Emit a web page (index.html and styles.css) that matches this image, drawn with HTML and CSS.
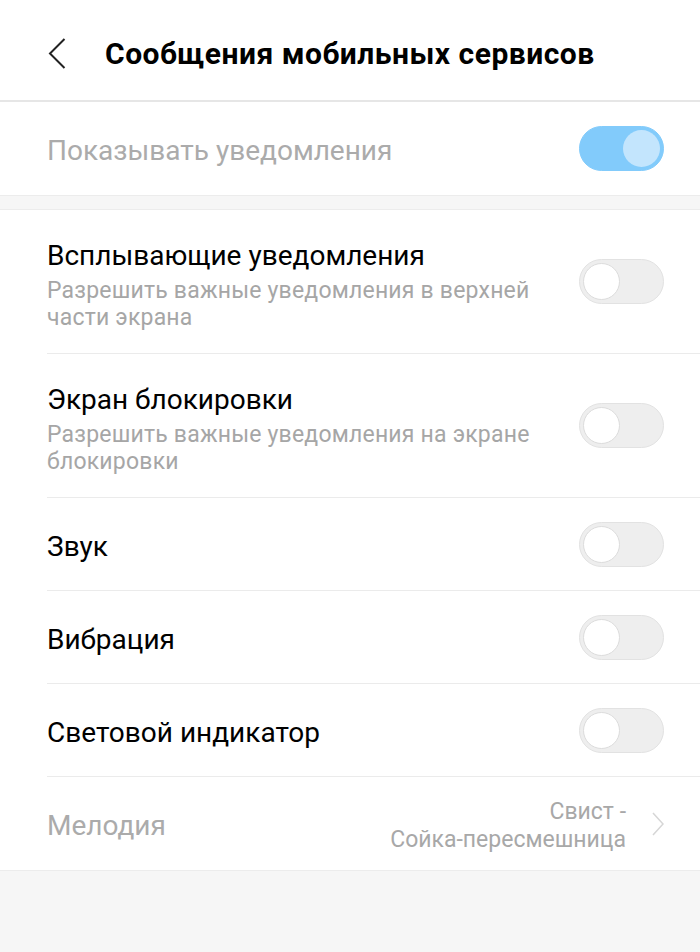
FILE: index.html
```html
<!DOCTYPE html>
<html lang="ru">
	<head>
		<meta charset="UTF-8">
		<title>Сообщения мобильных сервисов</title>
		<link rel="stylesheet" href="styles.css">
	</head>
	<body>
		<div class="header">
			<a class="back" href="#">
				<svg width="18" height="31" viewBox="0 0 18 31"><path d="M16.5 1 L2 15.5 L16.5 30" fill="none" stroke="#222" stroke-width="2"/></svg>
			</a>
			<h1>Сообщения мобильных сервисов</h1>
		</div>

		<div class="group">
			<div class="row">
				<div class="text">
					<div class="title muted">Показывать уведомления</div>
				</div>
				<span class="switch on"><span class="knob"></span></span>
			</div>
		</div>

		<div class="gap"></div>

		<div class="group list">
			<div class="row tall">
				<div class="text">
					<div class="title">Всплывающие уведомления</div>
					<div class="sub">Разрешить важные уведомления в верхней части экрана</div>
				</div>
				<span class="switch"><span class="knob"></span></span>
			</div>
			<div class="row tall">
				<div class="text">
					<div class="title">Экран блокировки</div>
					<div class="sub">Разрешить важные уведомления на экране блокировки</div>
				</div>
				<span class="switch"><span class="knob"></span></span>
			</div>
			<div class="row">
				<div class="text">
					<div class="title">Звук</div>
				</div>
				<span class="switch"><span class="knob"></span></span>
			</div>
			<div class="row">
				<div class="text">
					<div class="title">Вибрация</div>
				</div>
				<span class="switch"><span class="knob"></span></span>
			</div>
			<div class="row">
				<div class="text">
					<div class="title">Световой индикатор</div>
				</div>
				<span class="switch"><span class="knob"></span></span>
			</div>
			<div class="row">
				<div class="text">
					<div class="title muted">Мелодия</div>
				</div>
				<div class="value">Свист -<br>Сойка-пересмешница</div>
				<svg class="arrow" width="12" height="24" viewBox="0 0 12 24"><path d="M1 1 L11 12 L1 23" fill="none" stroke="#d6d6d6" stroke-width="1.5"/></svg>
			</div>
		</div>
	</body>
</html>
```

FILE: styles.css
```css
* { padding: 0; margin: 0; box-sizing: border-box; }
body { font-family: Roboto, "Noto Sans", sans-serif; background: #f6f6f6; color: #000; }

/* шапка */
.header { display: flex; align-items: center; height: 102px; background: #fff; border-bottom: 2px solid #e6e6e6; padding-left: 48px; padding-top: 6px; }
.back { display: flex; width: 57px; }
.header h1 { font-size: 30px; font-weight: 700; letter-spacing: 0.5px; }

.group { background: #fff; }
.gap { height: 15px; border-top: 1px solid #ececec; border-bottom: 1px solid #ececec; }
.list { border-bottom: 1px solid #ececec; }

/* строки */
.row { display: flex; align-items: center; height: 93px; padding: 0 36px 0 47px; }
.list .row { margin-left: 47px; padding-left: 0; border-bottom: 1px solid #ebebeb; }
.list .row:last-child { border-bottom: none; }
.row.tall { height: 144px; }
.text { flex: 1; padding-top: 5px; }
.row.tall .text { padding-top: 6px; }
.title { font-size: 28px; line-height: 34px; }
.muted { color: #ababab; }
.sub { font-size: 23px; line-height: 27px; color: #a6a6a6; margin-top: 4px; max-width: 500px; letter-spacing: 0.2px; }

/* переключатель */
.switch { position: relative; width: 85px; height: 45px; border-radius: 23px; background: #eeeeee; border: 1px solid #e2e2e2; flex: none; }
.switch .knob { position: absolute; left: 3px; top: 3px; width: 37px; height: 37px; border-radius: 50%; background: #fff; border: 1px solid #dcdcdc; }
.switch.on { background: #82cbfb; border-color: #82cbfb; }
.switch.on .knob { left: auto; right: 3px; background: #c3e5fd; border: none; }

.value { text-align: right; font-size: 23px; line-height: 28px; color: #a8a8a8; margin-right: 26px; padding-top: 4px; }
```
